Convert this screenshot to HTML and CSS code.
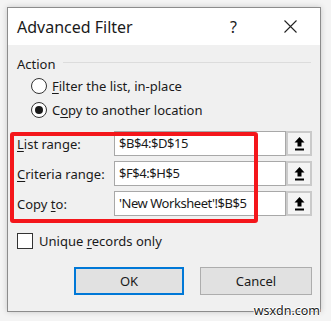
FILE: index.html
```html
<!DOCTYPE html>
<html lang="en">
<head>
    <meta charset="UTF-8">
    <title>Advanced Filter</title>
    <link rel="stylesheet" href="styles.css">
</head>
<body>

<div class="dialog">
    <div class="titlebar">
        <span class="title">Advanced Filter</span>
        <span class="help">?</span>
        <span class="close"><svg width="13" height="13" viewBox="0 0 13 13"><path d="M0.5 0.5 L12.5 12.5 M12.5 0.5 L0.5 12.5" stroke="#222" stroke-width="1.1"/></svg></span>
    </div>

    <div class="content">
        <div class="group-head">
            <span>Action</span>
            <div class="rule"></div>
        </div>

        <div class="radio-row">
            <span class="radio"></span>
            <span><u>F</u>ilter the list, in-place</span>
        </div>
        <div class="radio-row">
            <span class="radio checked"></span>
            <span>C<u>o</u>py to another location</span>
        </div>

        <div class="ranges">
            <div class="field">
                <label><u>L</u>ist range:</label>
                <div class="input">$B$4:$D$15</div>
                <span class="pick"><svg width="11" height="14" viewBox="0 0 11 14"><path d="M5.5 0 L10.5 5.5 L7.5 5.5 L7.5 9.5 L3.5 9.5 L3.5 5.5 L0.5 5.5 Z" fill="#000"/><rect x="1" y="11.5" width="9" height="2" fill="#000"/></svg></span>
            </div>
            <div class="field">
                <label><u>C</u>riteria range:</label>
                <div class="input">$F$4:$H$5</div>
                <span class="pick"><svg width="11" height="14" viewBox="0 0 11 14"><path d="M5.5 0 L10.5 5.5 L7.5 5.5 L7.5 9.5 L3.5 9.5 L3.5 5.5 L0.5 5.5 Z" fill="#000"/><rect x="1" y="11.5" width="9" height="2" fill="#000"/></svg></span>
            </div>
            <div class="field">
                <label>Copy <u>t</u>o:</label>
                <div class="input">'New Worksheet'!$B$5</div>
                <span class="pick"><svg width="11" height="14" viewBox="0 0 11 14"><path d="M5.5 0 L10.5 5.5 L7.5 5.5 L7.5 9.5 L3.5 9.5 L3.5 5.5 L0.5 5.5 Z" fill="#000"/><rect x="1" y="11.5" width="9" height="2" fill="#000"/></svg></span>
            </div>
        </div>

        <div class="check-row">
            <span class="checkbox"></span>
            <span>Unique <u>r</u>ecords only</span>
        </div>

        <div class="buttons">
            <button class="btn default">OK</button>
            <button class="btn">Cancel</button>
        </div>
    </div>

    <div class="highlight"></div>
</div>

<div class="watermark">wsxdn.com</div>

</body>
</html>
```

FILE: styles.css
```css
/* Advanced Filter dialog */
body {
    margin: 0;
    width: 331px;
    height: 321px;
    background-color: #f4f4f4;
    font-family: "Noto Sans", "Open Sans", sans-serif;
    font-size: 13px;
    color: #1a1a1a;
    position: relative;
    overflow: hidden;
}
u {
    text-decoration-thickness: 1px;
    text-underline-offset: 2px;
}
.dialog {
    position: relative;
    margin: 7px 0 0 7px;
    width: 312px;
    height: 303px;
    border: 1px solid #8c8c8c;
    background-color: #f0f0f0;
    box-shadow: 0 0 6px rgba(0, 0, 0, 0.18);
}
.titlebar {
    height: 37px;
    background-color: #fff;
    display: flex;
    align-items: center;
    padding-left: 9px;
}
.title {
    font-size: 16px;
    flex: 1;
    padding-top: 1px;
}
.help {
    font-size: 16px;
    width: 14px;
    margin-right: 40px;
}
.close {
    width: 13px;
    height: 13px;
    margin-right: 23px;
    display: flex;
}
.content {
    padding: 9px 8px 0 9px;
}
.group-head {
    height: 20px;
    display: flex;
    align-items: center;
}
.group-head .rule {
    flex: 1;
    height: 1px;
    background-color: #dcdcdc;
    margin: 0 1px 3px 7px;
}
.radio-row {
    height: 24px;
    display: flex;
    align-items: center;
    padding-left: 14px;
}
.radio-row:first-of-type {
    margin-top: 6px;
}
.radio {
    width: 14px;
    height: 14px;
    border: 1px solid #333;
    border-radius: 50%;
    background-color: #fff;
    margin-right: 5px;
    position: relative;
}
.radio.checked::after {
    content: "";
    position: absolute;
    left: 3px;
    top: 3px;
    width: 8px;
    height: 8px;
    border-radius: 50%;
    background-color: #1a1a1a;
}
.ranges {
    margin-top: 9px;
    display: flex;
    flex-direction: column;
    gap: 5px;
}
.field {
    height: 25px;
    display: flex;
    align-items: center;
}
.field label {
    width: 97px;
}
.input {
    width: 166px;
    height: 23px;
    border: 1px solid #a8a8a8;
    background-color: #fff;
    padding-left: 4px;
    line-height: 23px;
    letter-spacing: -0.45px;
}
.pick {
    width: 22px;
    height: 21px;
    border: 2px solid #cacaca;
    background-color: #f4f4f4;
    display: flex;
    align-items: center;
    justify-content: center;
}
.check-row {
    margin-top: 17px;
    height: 16px;
    display: flex;
    align-items: center;
}
.checkbox {
    width: 14px;
    height: 14px;
    border: 1px solid #333;
    background-color: #fff;
    margin-right: 6px;
}
.buttons {
    margin-top: 18px;
    display: flex;
    justify-content: flex-end;
    gap: 16px;
}
.btn {
    font-family: inherit;
    font-size: 13px;
    color: #1a1a1a;
    width: 112px;
    height: 28px;
    border: 1px solid #adadad;
    background-color: #e1e1e1;
    padding: 0;
}
.btn.default {
    width: 110px;
    border: 2px solid #0078d7;
}
.highlight {
    position: absolute;
    left: 2px;
    top: 124px;
    width: 240px;
    height: 83px;
    border: 4px solid #f4161b;
    border-radius: 3px;
}
.watermark {
    position: absolute;
    right: 11px;
    bottom: 2px;
    font-size: 12.5px;
    color: #222;
    text-shadow: 1px 0 #fff, -1px 0 #fff, 0 1px #fff, 0 -1px #fff;
}
```
